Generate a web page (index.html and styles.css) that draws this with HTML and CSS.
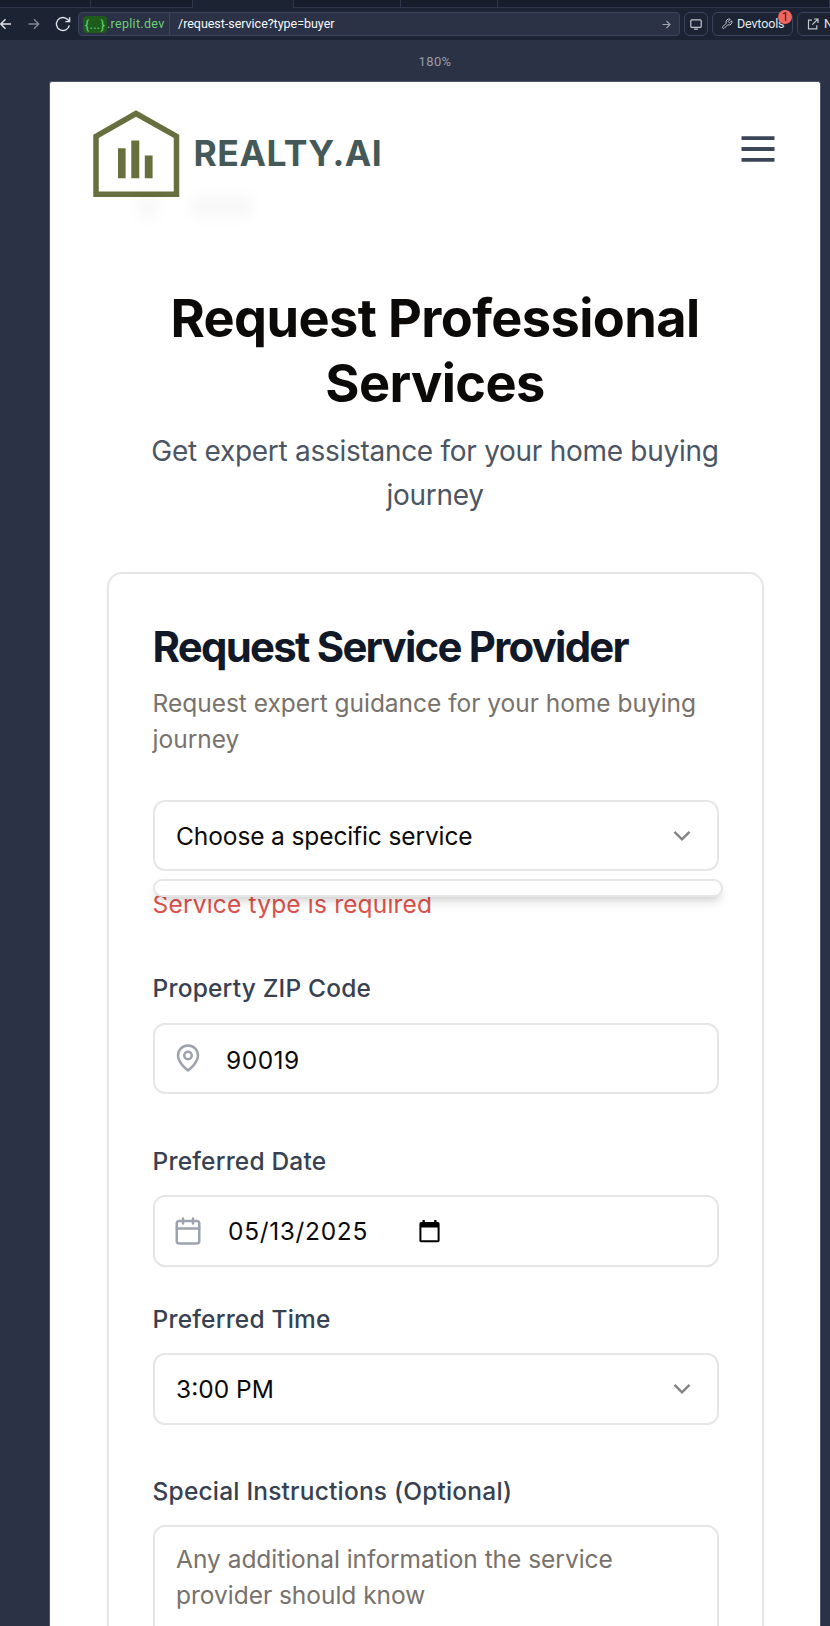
FILE: index.html
```html
<!DOCTYPE html>
<html lang="en">
<head>
<meta charset="utf-8">
<title>Request Professional Services</title>
<link rel="stylesheet" href="styles.css">
</head>
<body>
<div class="tabs"><i class="tab t1"></i><i class="tab t2"></i><i class="tab t3 active"></i><i class="tab t4"></i><i class="tab t5"></i><i class="tab t6"></i></div>
<div class="toolbar">
  <svg class="nav back" width="12" height="12" viewBox="0 0 12 12"><path d="M11 6H1M5.500 1.300L.8 6l4.700 4.700"/></svg>
  <svg class="nav fwd" width="12" height="12" viewBox="0 0 12 12"><path d="M.5 6h10M6 1.300L10.700 6 6 10.700"/></svg>
  <svg class="nav reload" width="16" height="16" viewBox="0 0 16 16"><path d="M14.300 9.300A6.500 6.500 0 1 1 12.900 3.800L14.600 5.600M14.600 1.300v4.300h-4.300"/></svg>
  <div class="url">
    <div class="host"><span class="chip">{...}</span><span class="domain">.replit.dev</span></div>
    <span class="path">/request-service?type=buyer</span>
    <svg class="go" width="9" height="9" viewBox="0 0 9 9"><path d="M.5 4.500h7.500M4.500 1l3.500 3.500L4.500 8"/></svg>
  </div>
  <div class="btn square"><svg width="12" height="11" viewBox="0 0 12 11"><rect x=".8" y=".8" width="10.400" height="7.600" rx="1"/><path d="M4 10.200h4"/></svg></div>
  <div class="btn dev"><svg width="12" height="12" viewBox="0 0 24 24"><path class="wrench" d="M14.700 6.300a1 1 0 0 0 0 1.400l1.600 1.600a1 1 0 0 0 1.400 0l3.770-3.770a6 6 0 0 1-7.940 7.940l-6.910 6.910a2.120 2.120 0 0 1-3-3l6.910-6.910a6 6 0 0 1 7.940-7.940l-3.760 3.760z"/></svg><span>Devtools</span><b class="badge">1</b></div>
  <div class="btn newtab"><svg width="12" height="12" viewBox="0 0 12 12"><path d="M5 2.200H1.500v8.600h8.300V7.300M7 1h4v4M11 1L5.300 6.700"/></svg><span>N</span></div>
</div>
<div class="zoom">180%</div>
<main class="device">
  <header class="header">
    <div class="ghost g1"></div><div class="ghost g2"></div>
    <div class="brand">
      <svg width="88" height="88" viewBox="0 0 88 88"><path d="M3 26.300L43 3.500 83.500 26.300V84.200H3z" fill="none" stroke="#666f3d" stroke-width="5.500"/><path d="M25 38.300h7.600v29.900H25zM38.300 30.500h8v37.700h-8zM51.800 45.500h7.800v22.700h-7.800z" fill="#666f3d"/></svg>
      <span class="name">REALTY.AI</span>
    </div>
    <svg class="menu" width="34" height="28" viewBox="0 0 34 28"><path d="M.5 3.200h33M.5 14h33M.5 24.800h33" fill="none" stroke="#3b4558" stroke-width="3.800"/></svg>
  </header>
  <h1 class="heading">Request Professional<br>Services</h1>
  <p class="sub">Get expert assistance for your home buying<br>journey</p>
  <section class="card">
    <h2 class="title">Request Service Provider</h2>
    <p class="desc">Request expert guidance for your home buying<br>journey</p>
    <div class="control service"><span class="choose">Choose a specific service</span>
      <svg class="chev" width="18" height="12" viewBox="0 0 18 12"><path d="M1.500 1.800L9 9.300l7.500-7.500"/></svg>
      <div class="popup"></div>
    </div>
    <p class="error">Service type is required</p>
    <label class="label">Property ZIP Code</label>
    <div class="control">
      <svg class="icon" width="30" height="30" viewBox="0 0 24 24"><path d="M20 10c0 6-8 12-8 12s-8-6-8-12a8 8 0 0 1 16 0Z"/><circle cx="12" cy="10" r="3"/></svg>
      <span class="value zip">90019</span>
    </div>
    <label class="label date-label">Preferred Date</label>
    <div class="control">
      <svg class="icon" width="30" height="30" viewBox="0 0 24 24"><rect x="3" y="4" width="18" height="18" rx="2"/><path d="M8 2v4M16 2v4M3 10h18"/></svg>
      <span class="value date">05/13/2025</span>
      <svg class="picker" width="21" height="23" viewBox="0 0 21 23"><path fill-rule="evenodd" d="M3.500 0h2.300v2h9.400V0h2.300v2H19q1.600 0 1.600 1.700v16.800q0 1.700-1.600 1.700H2Q.4 22.200.4 20.500V3.700Q.4 2 2 2h1.500zM2.400 7.500v12.700h16.200V7.500z"/></svg>
    </div>
    <label class="label time-label">Preferred Time</label>
    <div class="control"><span>3:00 PM</span>
      <svg class="chev" width="18" height="12" viewBox="0 0 18 12"><path d="M1.500 1.800L9 9.300l7.500-7.500"/></svg>
    </div>
    <label class="label special-label">Special Instructions (Optional)</label>
    <div class="area">Any additional information the service<br>provider should know</div>
  </section>
</main>
</body>
</html>
```
FILE: styles.css
```css
* { box-sizing: border-box; }
body { margin: 0; height: 1626px; overflow: hidden; background: #2b3245; font-family: Inter, sans-serif; display: flex; flex-direction: column; }
h1, h2, p { margin: 0; }
svg { flex: none; }

.tabs { display: flex; height: 8px; background: #1c2333; flex: none; }
.tab { flex: none; background: #171d2a; border-right: 1px solid #2f364a; border-bottom: 1px solid #2f364a; }
.tab.active { background: #1c2333; border-bottom: 0; }
.t1 { width: 91px; }
.t2 { width: 102px; }
.t3 { width: 101px; }
.t4 { width: 107px; }
.t5 { width: 97px; }
.t6 { width: 332px; }

.toolbar { flex: none; height: 32px; background: #1c2333; display: flex; align-items: center; font: 13px Roboto, sans-serif; color: #e6e9ef; overflow: hidden; }
.toolbar svg { fill: none; stroke: #c2c8cc; stroke-width: 1.2; }
.toolbar .wrench { stroke-width: 2; }
.toolbar .nav { stroke: #dfe2e8; stroke-width: 1.4; }
.toolbar .fwd { stroke: #83878f; margin-left: 16px; }
.toolbar .reload { margin: 0 8px 0 15px; }
.url { width: 602px; margin-left: -1px; height: 24px; border: 1px solid #3c445c; border-radius: 4px; background: #2b3245; display: flex; align-items: center; flex: none; padding-right: 8px; }
.host { width: 91px; height: 22px; padding-left: 4px; border-right: 1px solid #3c445c; display: flex; align-items: center; color: #6cd177; }
.chip { width: 24px; height: 17px; line-height: 17px; border-radius: 4px; background: #1f5c1c; text-align: center; letter-spacing: .3px; }
.domain { font-size: 12.500px; letter-spacing: .3px; }
.path { margin-left: 8px; flex: 1; color: #f5f9fc; font-size: 12.500px; letter-spacing: -.03px; }
.domain, .path, .btn span { margin-top: -1px; }
.toolbar .go { stroke: #9da2a6; }
.btn { height: 24px; border: 1px solid #3c445c; border-radius: 6px; display: flex; align-items: center; flex: none; margin-left: 4px; position: relative; font-size: 12.500px; letter-spacing: -.15px; }
.square { width: 24px; justify-content: center; }
.dev { width: 81px; padding-left: 8px; gap: 4px; }
.newtab { width: 80px; padding-left: 9px; gap: 5px; }
.badge { position: absolute; right: 0; top: -3px; width: 14px; height: 14px; border-radius: 50%; background: #f06560; color: #4a1514; font: 12px/14px Roboto, sans-serif; text-align: center; }

.zoom { flex: none; height: 41px; padding-top: 2px; width: 770px; margin-left: 50px; text-align: center; font: 13px/39px Roboto, sans-serif; letter-spacing: .4px; color: #9a9da6; }

.device { width: 772px; margin-left: 49px; flex: 1; background: #fff; border: 1px solid #50566b; border-bottom: 0; border-radius: 3px 3px 0 0; display: flex; flex-direction: column; align-items: center; overflow: hidden; }
.header { width: 100%; height: 144px; flex: none; position: relative; display: flex; justify-content: space-between; padding: 28px 45px 0 43px; }
.brand { display: flex; height: 88px; }
.name { margin: 22px 0 0 12.500px; font-size: 35.500px; font-weight: 700; line-height: 44px; letter-spacing: .5px; color: #455a58; }
.menu { margin-top: 24.500px; }
.ghost { position: absolute; background: rgba(0,0,0,.027); filter: blur(6px); }
.g1 { left: 89px; top: 113px; width: 18px; height: 23px; }
.g2 { left: 142px; top: 113px; width: 60px; height: 23px; }

.heading { margin-top: 60.400px; font-size: 52.300px; line-height: 64.800px; font-weight: 700; letter-spacing: -.6px; text-align: center; color: #0c0a09; white-space: nowrap; }
.sub { margin-top: 14.400px; font-size: 28px; line-height: 43.200px; color: #4b5563; text-align: center; white-space: nowrap; letter-spacing: -.28px; }

.card { width: 657px; height: 1200px; flex: none; margin: 55.500px 0 0 1px; border: 2px solid #e7e6e6; border-radius: 15px; padding: 43.500px 43px 0 43.600px; box-shadow: 0 2px 4px rgba(0,0,0,.05); display: flex; flex-direction: column; font-size: 24.500px; line-height: 36px; white-space: nowrap; color: #0c0a09; }
.title { font-size: 41.900px; line-height: 57.600px; font-weight: 700; letter-spacing: -1.750px; color: #111827; }
.desc { margin-top: 10px; color: #78716c; letter-spacing: -.02px; }
.control { height: 71.500px; flex: none; border: 2px solid #e7e6e6; border-radius: 12px; display: flex; align-items: center; padding: 0 26px 0 21.500px; position: relative; }
.service { margin-top: 42.500px; }
.choose { letter-spacing: -.12px; }
.chev { margin-left: auto; fill: none; stroke: #858484; stroke-width: 2.400; }
.popup { position: absolute; left: -2px; top: 77px; width: 570px; height: 18px; background: #fff; border: 2px solid #e7e6e6; border-radius: 10px; box-shadow: 0 7px 11px -2px rgba(0,0,0,.13), 0 4px 7px -4px rgba(0,0,0,.12); }
.error { margin-top: 14.500px; color: #dd524c; letter-spacing: .18px; }
.label { font-weight: 500; color: #374151; letter-spacing: .19px; }
.error + .label { margin-top: 48.500px; }
.label + .control, .label + .area { margin-top: 16.200px; }
.icon { margin-left: -3px; fill: none; stroke: #9ca3af; stroke-width: 2; stroke-linecap: round; stroke-linejoin: round; }
.value { margin-left: 23px; letter-spacing: .45px; }
.zip { padding-top: 3px; }
.date-label { margin-top: 49px; }
.date { margin-left: 25px; letter-spacing: .65px; }
.picker { margin-left: 51.500px; fill: #000; }
.time-label { margin-top: 34.500px; }
.special-label { margin-top: 48.300px; }
.area { height: 144px; flex: none; border: 2px solid #e7e6e6; border-radius: 12px; padding: 14px 21.500px; color: #78716c; letter-spacing: -.03px; }
```
